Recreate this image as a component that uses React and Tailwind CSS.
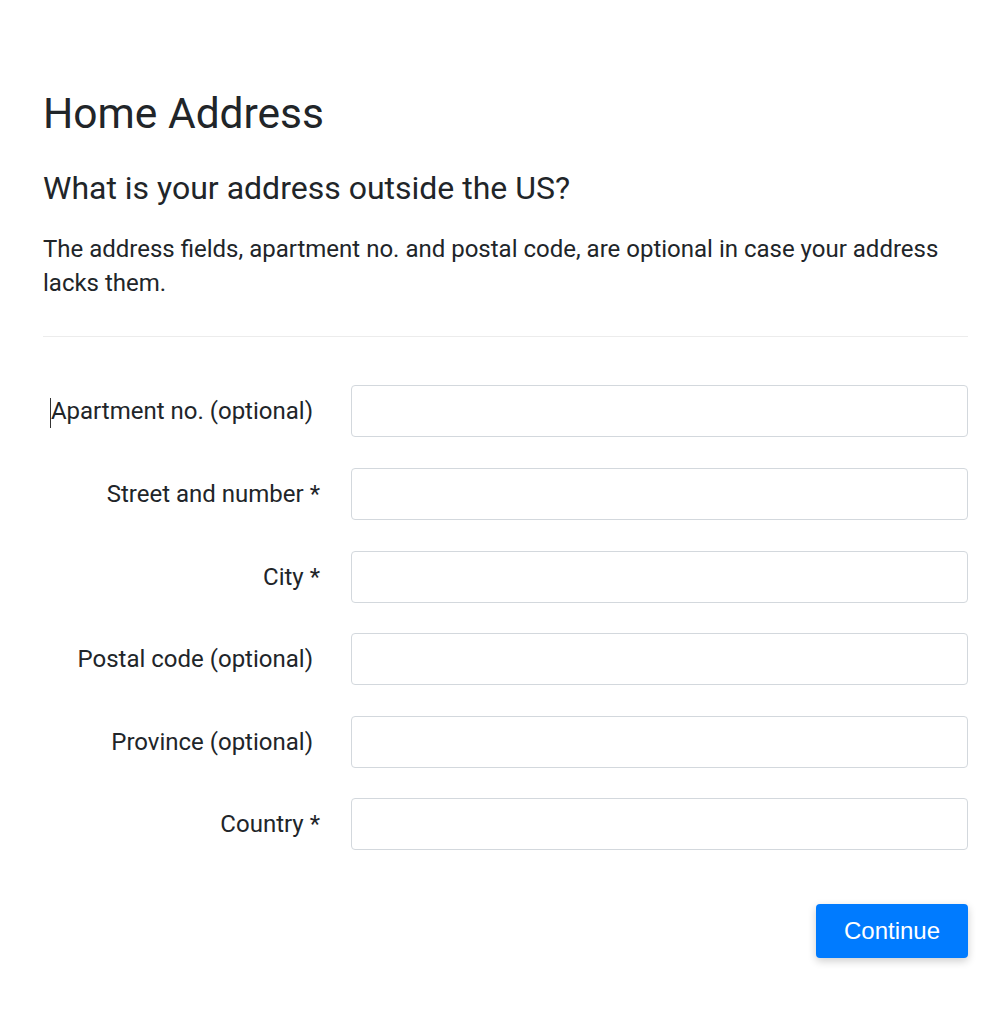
import React from "react";

const fields = [
  { label: "Apartment no. (optional)", optional: true, caret: true },
  { label: "Street and number *" },
  { label: "City *" },
  { label: "Postal code (optional)", optional: true },
  { label: "Province (optional)", optional: true },
  { label: "Country *" },
];

export default function App() {
  return (
    <div
      className="min-h-screen bg-white text-[#212529] pl-[43px] pr-[40px] pt-[89px]"
      style={{ fontFamily: "Roboto, 'Liberation Sans', sans-serif" }}
    >
      <h1 className="text-[42.5px] leading-[50px] m-0">Home Address</h1>
      <h3 className="text-[32px] leading-[1.2] mt-[30px]">What is your address outside the US?</h3>
      <p className="text-[24px] leading-[34px] mt-[25px]">
        The address fields, apartment no. and postal code, are optional in case your address lacks them.
      </p>
      <hr className="border-0 border-t border-[#ececec] mt-[36px] mb-[48px]" />

      <form className="flex flex-col gap-[30.6px]">
        {fields.map((f) => (
          <div key={f.label} className="flex items-center">
            <label
              className={
                "w-[277px] text-right text-[24px] shrink-0 " + (f.optional ? "pr-[7px]" : "")
              }
            >
              {f.caret && <span className="inline-block w-px h-[30px] bg-[#333] align-middle" />}
              {f.label}
            </label>
            <input
              type="text"
              className="ml-[31px] flex-1 h-[52px] border border-[#d3d8dd] rounded-[4px] px-3 text-[24px] outline-none"
            />
          </div>
        ))}
      </form>

      <div className="flex justify-end mt-[54px]">
        <button
          type="button"
          className="bg-[#007bff] text-white rounded-[4px] w-[152px] h-[54px] text-[24px] shadow-[0_3px_8px_rgba(0,0,0,0.2)]"
          style={{ fontFamily: "'Liberation Sans', Arial, sans-serif" }}
        >
          Continue
        </button>
      </div>
    </div>
  );
}
